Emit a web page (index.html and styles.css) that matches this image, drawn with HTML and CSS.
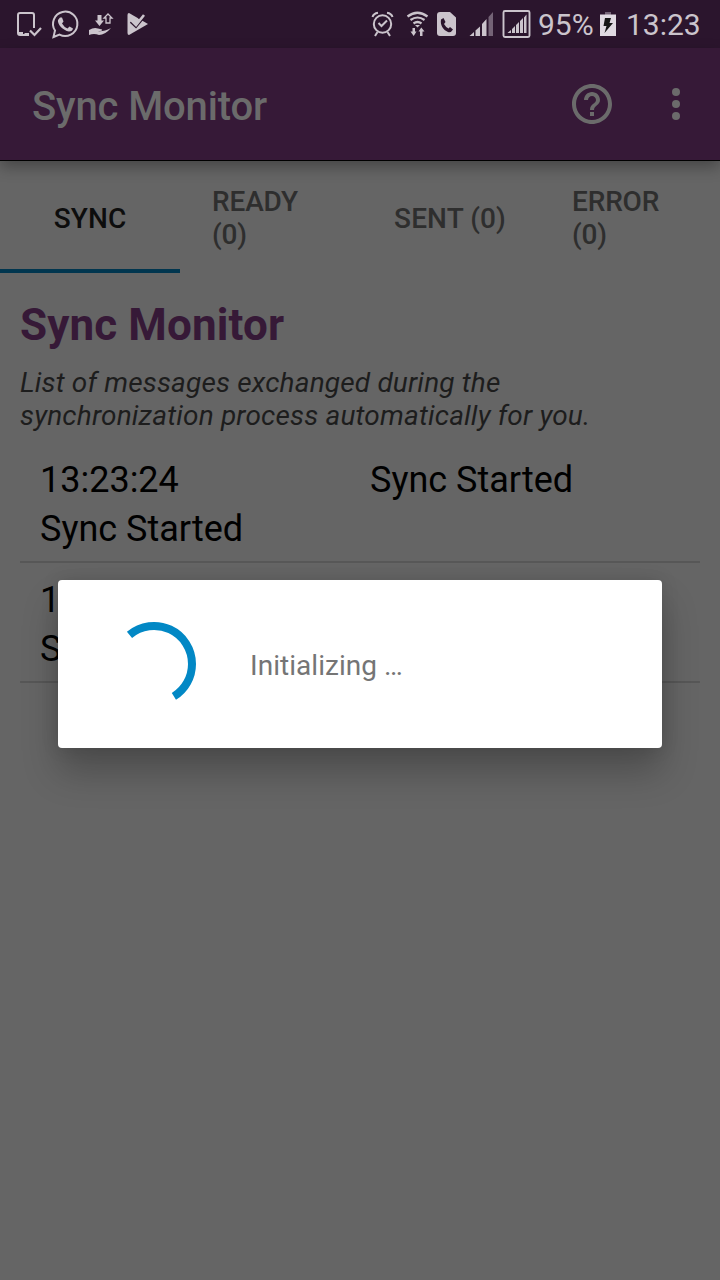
FILE: index.html
```html
<!DOCTYPE html>
<html lang="en">
<head>
<meta charset="utf-8">
<title>Sync Monitor</title>
<link rel="stylesheet" href="styles.css">
</head>
<body>
<div class="screen">
  <header class="status-bar">
    <svg class="status-icons" width="160" height="48" viewBox="0 0 160 48" fill="none" stroke="#cbc4cc">
      <path d="M29 35H20Q18 35 18 33V15Q18 13 20 13H32Q34 13 34 15V28" stroke-width="2"/>
      <path d="M18 33.500H23M24.500 34.500H29" stroke-width="3"/>
      <path d="M30 30.500L34.500 35L41 28" stroke-width="2.200"/>
      <path d="M53.500 37L55 30.500A12.200 12.200 0 1 1 59.500 34.600Z" stroke-width="2"/>
      <path d="M60 17.500L62 17.500L63.500 21.500L62 23.500Q64 27 67.500 28.500L69.500 26.500L73 28.500Q72.500 31.500 69 31.500C63 30.500 57 24 58 20Z" fill="#cbc4cc" stroke="none"/>
      <path d="M97.500 15H101.500V20.500H104L99.500 26L95 20.500H97.500Z" fill="#cbc4cc" stroke="none"/>
      <path d="M106 23V18H104L108 14L112 18H110V23Z" stroke-width="1.300"/>
      <path d="M89 30Q94 27 98 28.500L102 29.500Q103 31 98 31Q103 32 111 28Q105 35 99 35Q94 33 89 35Z" fill="#cbc4cc" stroke="none"/>
      <path d="M129 13L148 24L129 35Q127.500 35 127.500 33V15Q127.500 13 129 13Z" fill="#cbc4cc" stroke="none"/>
      <path d="M130.500 22L136 27.300L144.500 17" stroke="#2b152d" stroke-width="1.800"/>
      <path d="M138.500 18.500L142.500 14" stroke="#2b152d" stroke-width="1.600"/>
      <path d="M131.500 20.500L136 25L144 15" stroke-width="2.600"/>
    </svg>
    <div class="status-right">
      <svg class="status-icons" width="170" height="48" viewBox="365 0 170 48" fill="none" stroke="#cbc4cc">
        <circle cx="382.500" cy="24" r="8.700" stroke-width="2"/>
        <path d="M372.500 17Q373.500 13.500 378 12.800M392.500 17Q391.500 13.500 387 12.800M377.500 32L375 36M387.500 32L390 36" stroke-width="2"/>
        <path d="M378.500 23L381.500 26L387 20.500" stroke-width="2"/>
        <path d="M407.500 16.500Q417.500 9 427.500 16.500M410.500 20Q417.500 15 424.500 20M413.500 23.500Q417.500 20.500 421.500 23.500" stroke-width="2.200"/>
        <path d="M415 25H420L417.500 27.500Z" fill="#cbc4cc" stroke="none"/>
        <path d="M412.500 28H415V31.500H416.500L413.700 36L410.500 31.500H412.500ZM420 36H422.500V31.500H424.500L421.300 27.500L418.500 31.500H420Z" fill="#cbc4cc" stroke="none"/>
        <path d="M440 12H450L456 17.500V33Q456 36 453 36H440Q437 36 437 33V15Q437 12 440 12Z" fill="#cbc4cc" stroke="none"/>
        <path d="M441 19.500L443.500 18L445.500 22L444 24Q446 27.500 448.500 28.500L450 27L453 29.500Q451 33 448 32C443 30 440 25 441 19.500Z" fill="#2b152d" stroke="none"/>
        <path d="M469.500 36L474 32V36Z M475.500 30.500L480 26.500V36H475.500Z M482 24L486.500 19V36H482Z" fill="#cbc4cc" stroke="none"/>
        <path d="M488.500 17L493 12V36H488.500Z" fill="#746376" stroke="none"/>
        <rect x="503.500" y="11" width="26" height="26" rx="1.500" stroke-width="1.900"/>
        <path d="M507.500 33L511 30V33Z M512 29L515 26V33H512Z M516 25L519 22V33H516Z M520 21L523 18V33H520Z M524 17.500L526.500 14.500V33H524Z" fill="#cbc4cc" stroke="none"/>
      </svg>
      <span class="battery-level">95%</span>
      <svg class="battery" width="16" height="48" viewBox="600 0 16 48">
        <path d="M605 12H611V15H605Z" fill="#746376"/>
        <path d="M600 14.500H616V36H600Z" fill="#e0dae2"/>
        <path d="M605 18H611L609.500 23H613L604.500 33L606.500 26H603.500Z" fill="#161616"/>
      </svg>
      <span class="clock">13:23</span>
    </div>
  </header>

  <nav class="app-bar">
    <span class="app-title">Sync Monitor</span>
    <svg class="help" width="48" height="48" viewBox="0 0 24 24">
      <path d="M11 18h2v-2h-2v2zm1-16C6.480 2 2 6.480 2 12s4.480 10 10 10 10-4.480 10-10S17.520 2 12 2zm0 18c-4.410 0-8-3.590-8-8s3.590-8 8-8 8 3.590 8 8-3.590 8-8 8zm0-14c-2.210 0-4 1.790-4 4h2c0-1.100.9-2 2-2s2 .9 2 2c0 2-3 1.750-3 5h2c0-2.250 3-2.500 3-5 0-2.210-1.790-4-4-4z"/>
    </svg>
    <svg class="more" width="48" height="48" viewBox="0 0 24 24">
      <circle cx="12" cy="6" r="2"/><circle cx="12" cy="12" r="2"/><circle cx="12" cy="18" r="2"/>
    </svg>
  </nav>

  <div class="tabs">
    <div class="tab active"><span>SYNC</span></div>
    <div class="tab"><span>READY<br>(0)</span></div>
    <div class="tab"><span>SENT (0)</span></div>
    <div class="tab"><span>ERROR<br>(0)</span></div>
  </div>

  <main class="content">
    <h1 class="heading">Sync Monitor</h1>
    <p class="description">List of messages exchanged during the<br>synchronization process automatically for you.</p>
    <div class="log">
      <div class="entry"><span>13:23:24</span><span>Sync Started</span><span>Sync Started</span></div>
      <div class="entry"><span>13:23:24</span><span></span><span>Sync</span></div>
    </div>
  </main>

  <div class="dialog">
    <svg class="spinner" width="96" height="96" viewBox="0 0 96 96">
      <path d="M23.500 18.900A38 38 0 0 1 86 48A38 38 0 0 1 67.900 80.400" fill="none" stroke="#0288c5" stroke-width="8"/>
    </svg>
    <span class="dialog-text">Initializing …</span>
  </div>
</div>
</body>
</html>
```
FILE: styles.css
```css
* { box-sizing: border-box; }
body { margin: 0; font-family: Roboto, "Noto Sans", sans-serif; }
svg { display: block; flex: none; }

.screen {
  position: relative;
  width: 720px;
  height: 1280px;
  overflow: hidden;
  background: #656565;
}

.status-bar {
  display: flex;
  justify-content: space-between;
  height: 48px;
  background: #2b152d;
  color: #cbc4cc;
}
.status-right { display: flex; align-items: center; padding-right: 19px; line-height: 50px; }
.battery-level { width: 62px; margin-left: 3px; padding-top: 1px; font-size: 30px; white-space: nowrap; }
.battery { margin-right: 10px; }
.clock { width: 75px; padding-top: 1px; white-space: nowrap; font-size: 30px; }

.app-bar {
  position: relative;
  display: flex;
  align-items: center;
  height: 113px;
  padding: 0 20px 0 32px;
  background: #361937;
  border-bottom: 1px solid #000;
  box-shadow: 0 6px 14px rgba(0, 0, 0, .3);
}
.app-title {
  flex: 1;
  padding-top: 6px;
  color: #6b6b6b;
  font-size: 40px;
  font-weight: 500;
  letter-spacing: -.15px;
  line-height: 48px;
}
.help { margin-right: 36px; }
.help, .more { fill: #6b6b6b; }

.tabs { display: grid; grid-template-columns: repeat(4, 180px); height: 112px; }
.tab {
  display: flex;
  align-items: center;
  justify-content: center;
  padding-top: 6px;
  border-bottom: 4px solid transparent;
  color: #2e2e2e;
  font-size: 28px;
  font-weight: 500;
  letter-spacing: .1px;
  line-height: 33px;
}
.tab:nth-child(even) { justify-content: flex-start; padding-left: 32px; letter-spacing: -.15px; }
.tab.active { color: #0d0d0d; border-color: #01364f; }

.content { padding: 26px 20px 0; }
.heading { margin: 0; color: #361937; font-size: 44px; font-weight: 700; letter-spacing: .12px; line-height: 52px; }
.description {
  margin: 15px 0 11px;
  color: #1d1d1d;
  font-size: 28px;
  font-style: italic;
  letter-spacing: .17px;
  line-height: 33px;
}
.entry {
  display: grid;
  grid-template-columns: 330px 310px;
  grid-auto-rows: 49px;
  height: 120px;
  padding: 13px 20px 7px;
  border-bottom: 2px solid #575757;
  color: #000;
  font-size: 36px;
  line-height: 49px;
}

.dialog {
  position: absolute;
  left: 58px;
  top: 580px;
  width: 604px;
  height: 168px;
  display: flex;
  align-items: center;
  padding-left: 48px;
  border-radius: 4px;
  background: #fff;
  box-shadow: 0 24px 36px rgba(0, 0, 0, .24), 0 0 18px rgba(0, 0, 0, .12);
}
.dialog-text { margin-left: 48px; padding-top: 3px; color: #757575; font-size: 28px; letter-spacing: .04px; line-height: 33px; }
```
